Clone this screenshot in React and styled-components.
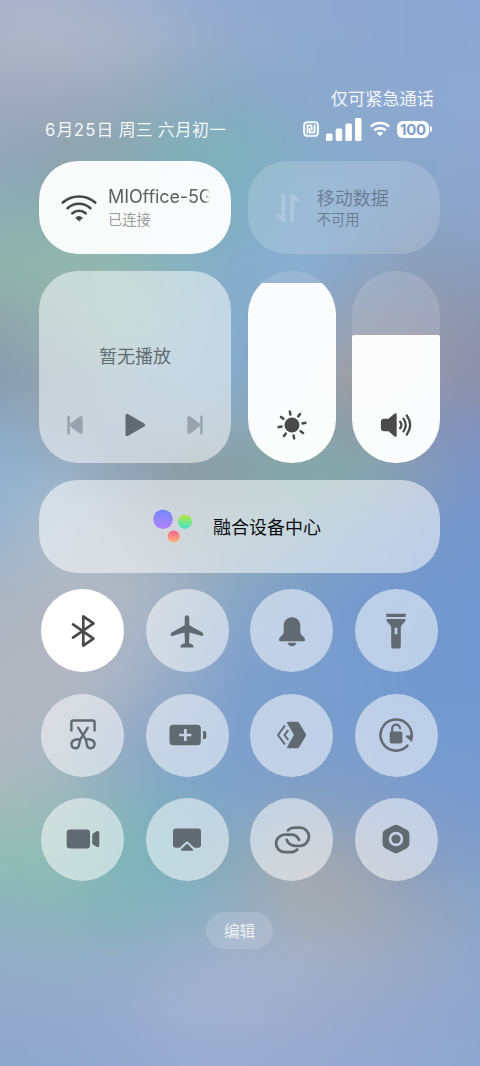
import React from 'react';
import styled, { createGlobalStyle } from 'styled-components';

const GlobalStyle = createGlobalStyle`
  * { box-sizing: border-box; }
  body {
    margin: 0;
    font-family: "Noto Sans CJK SC", "Noto Sans", sans-serif;
    overflow: hidden;
  }
`;

/* Wallpaper: each entry is a height and the colours across it; rows fade into one another. */
const WALLPAPER = [
  [0, 'a9b3cc a9b3cb a1b0cc 98add0 92aad1 8fa8d0 8da7d0 8ba7d1 8aa6d2'],
  [40, 'aeb4c4 afb6c6 a9b4c7 9db0ca 94abcc 8fa9ce 8da7cf 8ba7d0 8ba7d2'],
  [100, 'a0aabd 9faabc 9aabbb 8faabf 88a9c5 8aa9ca 8ca9ce 8da9d1 8ea9d2'],
  [150, '93a5b8 90a3b0 8aa5ae 7fb0b8 7db1bb 87acc8 89a9cd 8ba7cd 8da6cf'],
  [200, '8bacb5 88aab0 88adb2 82b0bb 80b0c3 88b0cf 8aabce 8ba6c9 8ea5cb'],
  [260, '90b6ab 93b8ac 90b7b0 88b2c0 85acca 8aafd2 8aa6c8 8b9fba 8b9fc0'],
  [320, '8fa5ab 93b0ae 93bab0 8db4c4 86aacc 88a9c8 969fb0 959aae 8d95ad'],
  [380, '8a9cae 8fa3b0 90abba 8bb0ca 85a9c9 8fa4b0 a39c9f 9498ad 8c8fa8'],
  [430, '8eabc6 95a5b5 96a6ba 94a9b8 8ba5b5 8aa5ad 8c9ca8 8595b8 8090bb'],
  [470, '8fb2cf 9ab3cb 8fa3b5 8b9ba3 88a0a4 82aaa7 87a8aa 869bb8 7a94c8'],
  [530, '9bb4cd adbccb a9b3c0 9aabb5 90adb5 88a8b8 7f9fc0 7898c8 7396cc'],
  [600, 'abb5c0 b0b7c1 b1b9c4 a0b1c4 88a5c6 7b9ecb 769ace 7398d0 7197d0'],
  [680, 'b2b6c0 b4b8c1 a9b4c5 93aac8 7fa0cc 799ecd 779ccf 7198ce 7198d0'],
  [750, 'b0b7c0 aab7c3 93aac4 84a3c9 7da0cc 799ccc 7a9dce 769bd0 769ad0'],
  [810, 'a0bab8 9ab9b9 88b3bb 7dabc3 83a4c8 88a3c0 869fc5 7f9cca 7b9bce'],
  [860, '8fbcb4 8fbdb5 80b6b8 7ab0be 8ca9b8 a5a9ae 99a3b3 8a9fc0 83a0cb'],
  [910, '8db4bd 8cb6b9 85b3ba 89b1c1 95adc2 a5adb4 a2a9b2 96a5bc 8ba4c6'],
  [960, '95aec8 95afc8 94aec9 9cafcb a2b0cb a2b0c8 a0adc4 99a9c5 90a7cc'],
  [1010, '94a9ca 94aacb 98acce a0b0d0 a2b0cf 9fadce 9aaacc 94a7cc 8fa6cc'],
  [1066, '8ea6cb 8fa7cc 93a9cf 98abd1 99abd1 98aad0 94a9d0 91a8cf 8ea6cf'],
];

/* The wallpaper reaches past the screen on every side so that its blur has no pale rim. */
const BLEED = 50;

const Screen = styled.div`
  display: grid;
  width: 480px;
  height: 1066px;
  overflow: hidden;
  > * { grid-area: 1 / 1; }
`;

const WallpaperLayer = styled.div`
  display: grid;
  margin: -${BLEED}px;
  filter: blur(14px);
  > * { grid-area: 1 / 1; }
`;

const WallpaperBand = styled.div`
  background: linear-gradient(90deg, ${p => p.$colors});
  mask-image: linear-gradient(180deg, ${p => p.$mask});
`;

const Panel = styled.main`
  z-index: 1;
  display: flex;
  flex-direction: column;
  padding: 86px 40px 0 39px;
`;

const Carrier = styled.div`
  align-self: flex-end;
  margin-right: 6px;
  font-size: 17.2px;
  line-height: 24px;
  color: rgba(255, 255, 255, 0.9);
`;

const StatusRow = styled.header`
  display: flex;
  justify-content: space-between;
  align-items: center;
  height: 24px;
  margin: 7px 8px 20px 6px;
`;

const DateText = styled.div`
  font-size: 16.8px;
  letter-spacing: 0.35px;
  line-height: 24px;
  white-space: nowrap;
  word-spacing: 0.8px;
  color: rgba(255, 255, 255, 0.92);
`;

const DateNumber = styled.span`
  font-family: "Inter", sans-serif;
  font-size: 16.8px;
  letter-spacing: 1.2px;
`;

const StatusIcons = styled.div`
  display: flex;
  align-items: center;
  color: #fff;
`;

const Battery = styled.div`
  display: flex;
  align-items: center;
  margin-left: 7px;
`;

const BatteryBody = styled.div`
  width: 32px;
  height: 17px;
  border-radius: 6px;
  background: #fff;
  color: #7e9dc8;
  font: 700 15px/17.5px "Inter", sans-serif;
  letter-spacing: -0.2px;
  text-align: center;
`;

const BatteryTip = styled.div`
  width: 2px;
  height: 6px;
  margin-left: 1px;
  border-radius: 0 2px 2px 0;
  background: rgba(255, 255, 255, 0.9);
`;

const CardGrid = styled.section`
  display: grid;
  grid-template-columns: 192px 192px;
  gap: 17px;
`;

const ToggleCard = styled.div`
  display: flex;
  align-items: center;
  height: 93px;
  padding: 0 22px 2px;
  border-radius: 39px;
  background: ${p => (p.$on ? 'rgba(255,255,255,0.95)' : 'rgba(255,255,255,0.16)')};
`;

const ToggleIcon = styled.div`
  display: flex;
  justify-content: center;
  width: 36px;
  padding-top: 2px;
  margin-right: 11px;
`;

const ToggleText = styled.div`
  width: 102px;
`;

const ToggleTitle = styled.div`
  font-size: 18px;
  line-height: 24px;
  white-space: nowrap;
  color: ${p => (p.$dim ? 'rgba(60,72,90,0.53)' : '#5f6161')};
  ${p => p.$fade && `
    overflow: hidden;
    font-family: "Inter", sans-serif;
    letter-spacing: -0.1px;
    mask-image: linear-gradient(90deg, #000 94%, transparent 100%);
  `}
`;

const ToggleState = styled.div`
  font-size: 14.3px;
  line-height: 20px;
  color: ${p => (p.$dim ? 'rgba(60,72,90,0.53)' : '#9b9d9d')};
`;

const MediaCard = styled.div`
  display: flex;
  flex-direction: column;
  align-items: center;
  height: 192px;
  padding-top: 72px;
  border-radius: 39px;
  background: rgba(255, 255, 255, 0.51);
`;

const MediaTitle = styled.div`
  font-size: 18px;
  line-height: 24px;
  color: #626c71;
`;

const MediaControls = styled.div`
  display: flex;
  align-items: center;
  justify-content: space-between;
  width: 138px;
  margin-top: 46px;
`;

const Sliders = styled.div`
  display: flex;
  justify-content: space-between;
`;

const SliderTrack = styled.div`
  display: flex;
  flex-direction: column;
  justify-content: flex-end;
  width: 88px;
  height: 192px;
  border-radius: 44px;
  overflow: hidden;
  background: rgba(255, 255, 255, 0.14);
`;

const SliderFill = styled.div`
  display: flex;
  align-items: flex-end;
  justify-content: center;
  height: ${p => p.$level}px;
  padding-bottom: 22px;
  border-radius: 2px 2px 0 0;
  background: rgba(255, 255, 255, 0.96);
`;

const DeviceCenter = styled.div`
  grid-column: 1 / -1;
  display: flex;
  align-items: center;
  height: 93px;
  padding: 0 0 2px 113px;
  gap: 19px;
  border-radius: 39px;
  background: rgba(255, 255, 255, 0.53);
  font-size: 18px;
  line-height: 24px;
  color: #0b0d10;
`;

const TileGrid = styled.section`
  display: grid;
  grid-template-columns: repeat(4, 83px);
  justify-content: space-between;
  row-gap: 21.3px;
  margin: 16.300px 2px 0 2px;
`;

const Tile = styled.div`
  display: flex;
  align-items: center;
  justify-content: center;
  height: 83px;
  border-radius: 50%;
  background: ${p => (p.$on ? '#fff' : 'rgba(255,255,255,0.52)')};
  color: ${p => (p.$on ? '#4a4a4a' : 'rgb(97,105,113)')};
`;

const EditButton = styled.div`
  align-self: center;
  margin-top: 31px;
  width: 67px;
  height: 37px;
  border-radius: 19px;
  background: rgba(255, 255, 255, 0.15);
  font-size: 15.6px;
  line-height: 36px;
  text-align: center;
  color: rgba(255, 255, 255, 0.8);
`;

const TileSvg = ({ children }) => (
  <svg width="42" height="42" viewBox="-21 -21 42 42" fill="none" stroke="currentColor" strokeWidth="2.5" strokeLinecap="round" strokeLinejoin="round">
    {children}
  </svg>
);

const solid = { fill: 'currentColor', stroke: 'none' };

const TILES = [
  { id: 'bluetooth', on: true, icon: (
    <path strokeWidth="2.7" d="M-10-6.6 10.5 7.6.3 14.6V-14.6L10.5-7.6-10 6.6" />
  ) },
  { id: 'airplane', icon: (
    <path {...solid} d="M0-15.8c1.4 0 2.3 1 2.3 2.5v7.6L15 1.3c1 .6 1.3 1.5 1.3 3.4L15 5 2.5 1.5 2 12l3.7 1.8c.7.5.8 1.3.8 2.7h-13c0-1.4.1-2.2.8-2.7L-2 12l-.5-10.5L-15 5l-1.3-.3c0-1.9.3-2.8 1.3-3.4l12.700-7v-7.600c0-1.500.9-2.500 2.300-2.500z" />
  ) },
  { id: 'bell', icon: (
    <g {...solid}>
      <path d="M0-13.800c-5 0-8.300 3.600-8.300 8.600v6.200c0 3.500-4.700 4.500-4.700 8 0 .8.5 1.200 1.300 1.200h23.400c.8 0 1.300-.4 1.300-1.200 0-3.500-4.700-4.500-4.700-8v-6.200c0-5-3.300-8.600-8.300-8.600z" />
      <path d="M-4.500 11.800h9c-.8 2.400-2.400 3.400-4.500 3.400s-3.700-1-4.500-3.400z" />
    </g>
  ) },
  { id: 'flashlight', icon: (
    <g {...solid}>
      <rect x="-9.700" y="-17.200" width="19.400" height="3.300" rx=".5" />
      <path fillRule="evenodd" d="M-9.500-12h19c.3 4-4.700 5.300-4.700 8.500V15c0 1.800-.8 2.600-2.600 2.600h-4.400c-1.800 0-2.600-.8-2.600-2.600V-3.500c0-3.200-5-4.500-4.700-8.500zM-1.400-3.200v6.400h2.800v-6.400z" />
    </g>
  ) },
  { id: 'screenshot', icon: (
    <g strokeWidth="2.4">
      <path strokeLinecap="butt" d="M-11.600-3.500V-12.500q0-2 2-2H9.600q2 0 2 2v9" />
      <path d="M-4.800-7.300 3 4.800M4.800-7.300-3 4.800" />
      <path d="M-2.800 4.800C-6 3.700-11.400 4.500-11.600 8.800c0 5.600 7 5.800 7.700 1zM2.800 4.800C6 3.700 11.400 4.500 11.600 8.800c0 5.600-7 5.800-7.700 1z" />
    </g>
  ) },
  { id: 'battery-saver', icon: (
    <path {...solid} fillRule="evenodd" d="M-14-10.300h24.300q3.500 0 3.500 3.500V6.800q0 3.500-3.500 3.500H-14q-3.500 0-3.500-3.500V-6.800q0-3.500 3.500-3.500zM-3-6v4.700h-4.700v2.600H-3V6H-.3V1.300h4.600v-2.600H-.3V-6zM16-4h1.500q1.800 0 1.800 1.800v4.400q0 1.800-1.800 1.800H16z" />
  ) },
  { id: 'app-transfer', icon: (
    <g strokeWidth="2">
      <path {...solid} d="M-4-13.300H5.300q1.200 0 1.800 1L13.800-1q.6 1 0 2L7.100 12.300q-.6 1-1.800 1H-4q-1.700 0-.8-1.600L2 0-4.800-11.700q-.9-1.600.8-1.600z" />
      <path d="M-7.500-8.800-14 0l6.500 8.800M-4.200-4.300-7.500 0l3.300 4.300" />
    </g>
  ) },
  { id: 'rotation-lock', icon: (
    <g>
      <path d="M11.500 10.700A15.600 15.600 0 1 1 15.600 1.800" />
      <path {...solid} d="M10.200.5h7.100l-1.500 6.400-5.700-4.800q-.7-1.300.1-1.600z" />
      <rect {...solid} x="-6.300" y="-3.400" width="12.700" height="12" rx="2" />
      <path strokeWidth="2.200" d="M-3.800-3v-3.200a3.900 3.900 0 0 1 7.800-.5" />
    </g>
  ) },
  { id: 'screen-recorder', icon: (
    <g {...solid}>
      <rect x="-16.300" y="-9.600" width="23.300" height="19.200" rx="3.300" />
      <path d="M9.300-3.500q0-1.400 1.100-2.200l3.200-2.100q2.700-1 2.700 1.400V6.400q0 2.400-2.700 1.400L10.400 5.700q-1.100-.8-1.100-2.200z" />
    </g>
  ) },
  { id: 'cast', icon: (
    <g {...solid}>
      <path d="M-11-10.500h22q3 0 3 3V5.700q0 3-3 3H7.300L1.500 3.200Q0 2-1.500 3.200L-7.300 8.700H-11q-3 0-3-3V-7.500q0-3 3-3z" />
      <path d="M-.8 5.300q.8-.7 1.600 0l5 5q.9 1.500-.8 1.500H-5q-1.700 0-.8-1.500z" />
    </g>
  ) },
  { id: 'link', icon: (
    <g strokeWidth="2.800">
      <path d="M-4-8.800Q-1.300-11.300 2.500-11.300H8C13-11.300 17-7 17-2.500S13 6.800 8.500 6.800H3.500C-.5 6.800-4.500 4.200-5.300.8" />
      <path d="M7 .8C5.500-2.500 2.500-4.300-1-4.300h-5.500C-12-4.300-15.900-.5-15.900 4.500S-12 13.200-7 13.200h5.500Q2.700 13.200 5.300 10.500" />
    </g>
  ) },
  { id: 'settings', icon: (
    <g>
      <path {...solid} fillRule="evenodd" d="M-2.200-13.700Q0-15 2.200-13.700L11.200-9Q13.400-7.700 13.400-5V5Q13.400 7.700 11.200 9L2.200 13.700Q0 15-2.200 13.700L-11.200 9Q-13.400 7.700-13.400 5V-5Q-13.400-7.700-11.200-9zM0-7.300A7.300 7.300 0 0 0 0 7.300 7.300 7.300 0 0 0 0-7.300z" />
      <circle {...solid} r="4.600" />
    </g>
  ) },
];

const NfcIcon = () => (
  <svg width="16" height="16" viewBox="0 0 16 16" fill="none" stroke="#fff">
    <rect x="1" y="1" width="14" height="14" rx="3.3" strokeWidth="1.7" fill="rgba(255,255,255,.2)" />
    <path d="M4.500 12.200V4.500H7.200Q8.700 4.500 8.700 6V9.300M11.600 3.900V10.100Q11.600 11.600 10.100 11.600H6.700V7" strokeWidth="1.500" />
  </svg>
);

const SignalIcon = () => (
  <svg width="36" height="23" viewBox="0 0 36 23" fill="#fff" style={{ marginLeft: 7 }}>
    <rect x="0" y="15.500" width="6.500" height="7.500" rx="1.500" />
    <rect x="9.700" y="10.500" width="6.500" height="12.500" rx="1.500" />
    <rect x="19.400" y="5.500" width="6.500" height="17.500" rx="1.500" />
    <rect x="29" y="0" width="6.500" height="23" rx="1.500" />
  </svg>
);

const SmallWifiIcon = () => (
  <svg width="20" height="16" viewBox="0 0 20 16" fill="none" stroke="#fff" strokeWidth="2.700" style={{ marginLeft: 8 }}>
    <path d="M1 5.600a13 13 0 0 1 18 0M4.300 9.300a8.300 8.300 0 0 1 11.400 0" />
    <path d="M10 15.300 6.800 12.100a4.600 4.600 0 0 1 6.400 0z" fill="#fff" stroke="none" />
  </svg>
);

const WifiIcon = () => (
  <svg width="36" height="28" viewBox="0 0 36 28" fill="none" stroke="#464747" strokeWidth="2.600" strokeLinecap="round">
    <path d="M1.800 8.600a24.500 24.500 0 0 1 32.400 0M6.600 14.200a17 17 0 0 1 22.800 0M11.400 19.300a9.800 9.800 0 0 1 13.200 0" />
    <path d="M18 26.800 14.700 23.600q3.300-2.200 6.600 0z" fill="#464747" stroke="#464747" strokeWidth="1" strokeLinejoin="round" />
  </svg>
);

const DataIcon = () => (
  <svg width="30" height="32" viewBox="0 0 30 32" fill="rgba(255,255,255,.19)">
    <path d="M8.500 1.500h3.700v28.800q-2 .3-3.300-1L1.700 22.700h6.800zM17.300 30.500V1.500q2-.3 3.300 1l7.200 6.600H21v21.400z" />
  </svg>
);

const SkipIcon = ({ flip }) => (
  <svg width="18" height="22" viewBox="0 0 18 22" fill="rgba(85,95,105,.42)" transform={flip ? 'scale(-1 1)' : undefined}>
    <rect x="1.300" y="1.500" width="2.500" height="19" rx="1" />
    <path d="M4.400 9.600 13.300 2.700q3.400-2 3.400 1.300v14q0 3.300-3.400 1.300L4.400 12.400q-1-1.400 0-2.800z" />
  </svg>
);

const PlayIcon = () => (
  <svg width="22" height="24" viewBox="0 0 22 24" fill="#616a70">
    <path d="M1.500 2.500Q1.500 0 3.800 1L20.200 10.500q2 1.500 0 3L3.800 23Q1.500 24 1.500 21.500z" />
  </svg>
);

const SunIcon = () => (
  <svg width="32" height="32" viewBox="-16 -16 32 32" fill="#4a4a4a">
    <circle r="7.500" />
    {[0, 1, 2, 3, 4, 5, 6, 7].map(i => (
      <rect key={i} x="-1.250" y="-14.700" width="2.500" height="5.200" rx=".7" transform={`rotate(${i * 45 - 9})`} />
    ))}
  </svg>
);

const VolumeIcon = () => (
  <svg width="32" height="32" viewBox="0 0 32 32" fill="none" stroke="#4a4a4a" strokeWidth="2.300" strokeLinecap="round">
    <path fill="#4a4a4a" stroke="none" d="M4 9.700h4.500L14.300 4.700Q16.700 3.300 16.700 5.500v21q0 2.200-2.400.8L8.500 22.300H4Q1 22.300.9 19.300v-6.600Q1 9.700 4 9.700z" />
    <path d="M20.200 12.700q2.500 3.300 0 6.600M23.500 9.700q4.500 6.300 0 12.600M26.800 6.500q6.700 9.500 0 19" />
  </svg>
);

const DevicesIcon = () => (
  <svg width="42" height="36" viewBox="0 0 42 36">
    <defs>
      <linearGradient id="violet" x1="0" y1="0" x2="0" y2="1"><stop stopColor="#7288fb" /><stop offset="1" stopColor="#b382fa" /></linearGradient>
      <linearGradient id="lime" x1="0" y1="0" x2="0" y2="1"><stop stopColor="#b4e63a" /><stop offset="1" stopColor="#42e5cf" /></linearGradient>
      <linearGradient id="coral" x1="0" y1="0" x2="0" y2="1"><stop stopColor="#fc6290" /><stop offset="1" stopColor="#ffb574" /></linearGradient>
    </defs>
    <circle cx="11" cy="11.300" r="9.800" fill="url(#violet)" />
    <circle cx="33" cy="13.800" r="7.100" fill="url(#lime)" />
    <circle cx="21.700" cy="28.500" r="6" fill="url(#coral)" />
  </svg>
);

const Wallpaper = () => (
  <WallpaperLayer>
    {WALLPAPER.map(([y, colors], i) => (
      <WallpaperBand
        key={y}
        $colors={colors.split(' ').map((c, n) => `#${c} ${BLEED + n * 60}px`).join(', ')}
        $mask={i === 0 ? '#000, #000' : `transparent ${BLEED + WALLPAPER[i - 1][0]}px, #000 ${BLEED + y}px`}
      />
    ))}
  </WallpaperLayer>
);

export default function App() {
  return (
    <>
      <GlobalStyle />
      <Screen>
        <Wallpaper />
        <Panel>
          <Carrier>仅可紧急通话</Carrier>
          <StatusRow>
            <DateText>
              <DateNumber>6</DateNumber>月<DateNumber>25</DateNumber>日 周三 六月初一
            </DateText>
            <StatusIcons>
              <NfcIcon />
              <SignalIcon />
              <SmallWifiIcon />
              <Battery>
                <BatteryBody>100</BatteryBody>
                <BatteryTip />
              </Battery>
            </StatusIcons>
          </StatusRow>
          <CardGrid>
            <ToggleCard $on>
              <ToggleIcon><WifiIcon /></ToggleIcon>
              <ToggleText>
                <ToggleTitle $fade>MIOffice-5G</ToggleTitle>
                <ToggleState>已连接</ToggleState>
              </ToggleText>
            </ToggleCard>
            <ToggleCard>
              <ToggleIcon><DataIcon /></ToggleIcon>
              <ToggleText>
                <ToggleTitle $dim>移动数据</ToggleTitle>
                <ToggleState $dim>不可用</ToggleState>
              </ToggleText>
            </ToggleCard>
            <MediaCard>
              <MediaTitle>暂无播放</MediaTitle>
              <MediaControls>
                <SkipIcon />
                <PlayIcon />
                <SkipIcon flip />
              </MediaControls>
            </MediaCard>
            <Sliders>
              <SliderTrack><SliderFill $level={180}><SunIcon /></SliderFill></SliderTrack>
              <SliderTrack><SliderFill $level={128}><VolumeIcon /></SliderFill></SliderTrack>
            </Sliders>
            <DeviceCenter>
              <DevicesIcon />
              融合设备中心
            </DeviceCenter>
          </CardGrid>
          <TileGrid>
            {TILES.map(t => (
              <Tile key={t.id} $on={t.on}><TileSvg>{t.icon}</TileSvg></Tile>
            ))}
          </TileGrid>
          <EditButton>编辑</EditButton>
        </Panel>
      </Screen>
    </>
  );
}
